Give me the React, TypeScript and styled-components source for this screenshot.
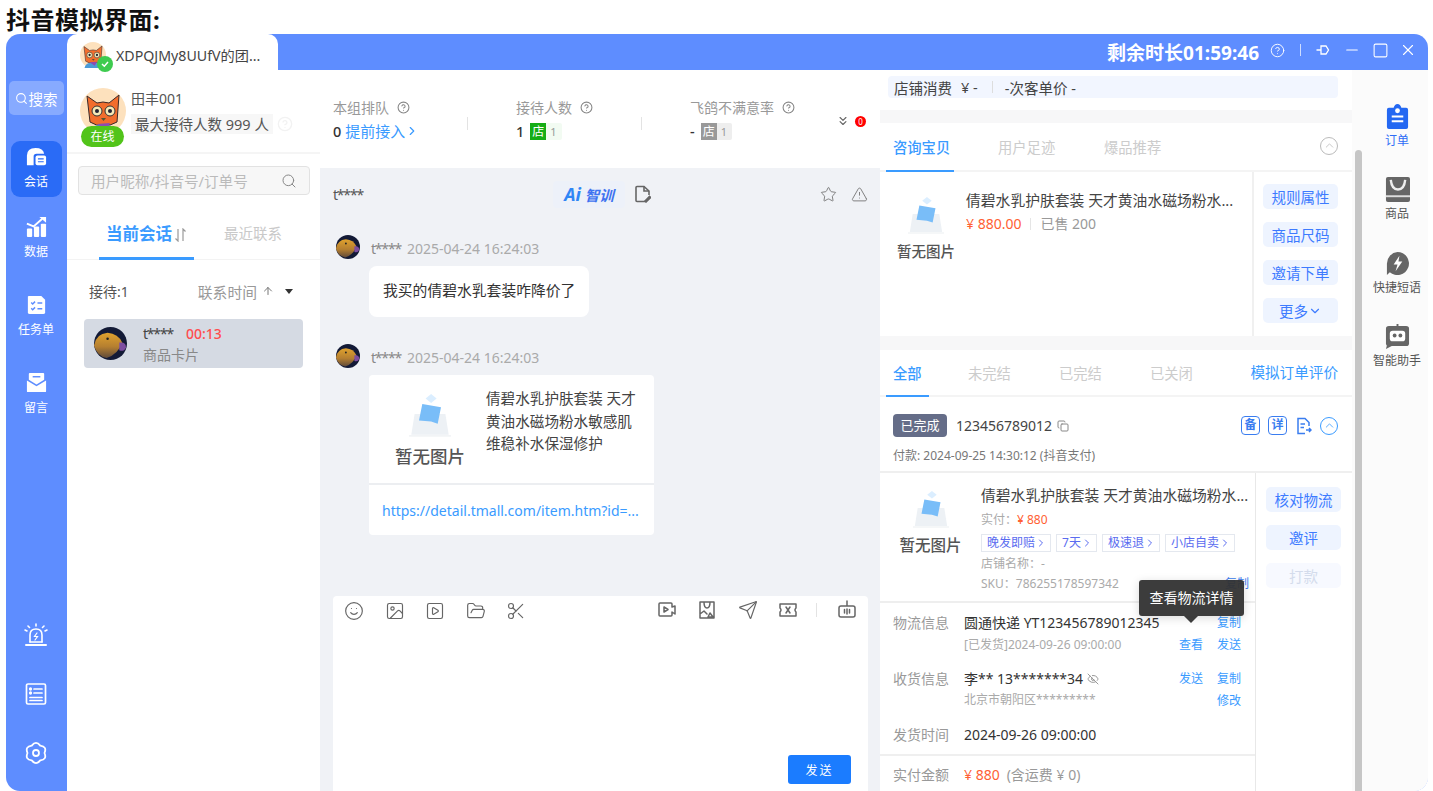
import React from "react";
import styled, { createGlobalStyle } from "styled-components";
import {
  Search, CircleHelp, Star, TriangleAlert, Smile, Image as ImageIcon, SquarePlay, FolderOpen, Scissors,
  Send, Minus, Square, X, ChevronDown, ChevronRight, ChevronUp, ChevronsDown, Copy, ArrowUp, EyeOff,
} from "lucide-react";

const Global = createGlobalStyle`
  html, body { margin: 0; padding: 0; background: #fff; overflow: hidden; }
  * { box-sizing: border-box; }
  body { font-family: "Noto Sans", "Noto Sans CJK SC", sans-serif; color: #333; }
`;

const Page = styled.div`width: 1433px; height: 791px; display: flex; flex-direction: column; overflow: hidden;`;
const Title = styled.h1`margin: 0; height: 34px; padding-left: 6px; font-size: 24px; line-height: 40px; font-weight: 700; color: #111; letter-spacing: .5px;`;
const Win = styled.div`flex: 1; min-height: 0; margin: 0 5px 0 6px; display: flex; border-radius: 14px; overflow: hidden; background: #5e8dff;`;

const Rail = styled.nav`width: 61px; flex: none; display: flex; flex-direction: column; align-items: center; padding: 47px 1px 26px 0; color: #fff;`;
const RailSearch = styled.div`width: 55px; height: 34px; border-radius: 5px; background: rgba(255,255,255,.26); display: flex; align-items: center; justify-content: center; font-size: 14.5px; gap: 1px; margin-bottom: 26px;`;
const RailItem = styled.div<{ $active?: boolean; $mt?: number }>`
  width: 51px; height: 56px; margin-top: ${p => p.$mt ?? 0}px; border-radius: 9px;
  background: ${p => (p.$active ? "#2a6bf6" : "transparent")};
  display: flex; flex-direction: column; align-items: center; justify-content: flex-start; padding-top: 4px; gap: 6px;
  font-size: 12px; line-height: 16px;
  svg { height: 23px; width: 23px; flex: none; }
`;
const RailBottom = styled.div`margin-top: auto; display: flex; flex-direction: column; align-items: center; gap: 35px; svg { display: block; }`;

const Main = styled.div`flex: 1; min-width: 0; display: flex; flex-direction: column;`;
const TopBar = styled.header`height: 36px; flex: none; display: flex; align-items: center; padding-bottom: 4px; color: #fff; position: relative; z-index: 2;`;
const StoreTab = styled.div`width: 211px; height: 37px; align-self: flex-start; background: #fff; border-radius: 10px 10px 0 0; display: flex; align-items: center; padding: 4px 0 0 13px; gap: 10px; color: #444; font-size: 14.2px;`;
const TabAvatar = styled.div`position: relative; width: 26px; height: 26px; svg { display: block; }`;
const CheckDot = styled.span`position: absolute; right: -7px; bottom: -4px; width: 16px; height: 16px; border-radius: 50%; background: #3ecb4f; display: flex; align-items: center; justify-content: center;`;
const Timer = styled.div`margin-left: auto; font-size: 19px; font-weight: 700; letter-spacing: 0; padding-top: 3px;`;
const WinBtns = styled.div`display: flex; align-items: center; margin: 0 11px 0 11px; gap: 10.5px; svg { display: block; }`;
const WinSep = styled.span`width: 1px; height: 12px; background: rgba(255,255,255,.7); margin: 0 4.5px;`;
const PinWrap = styled.span`margin-right: 2.5px;`;

const Body = styled.div`flex: 1; min-height: 0; display: flex; background: #fff;`;

const Session = styled.section`width: 253px; flex: none; display: flex; flex-direction: column; background: #fff;`;
const Me = styled.div`height: 84px; flex: none; border-bottom: 2px solid #f5f5f5; display: flex; padding: 18px 0 0 13px; gap: 5px;`;
const MeAvatar = styled.div`position: relative; width: 46px; height: 46px; svg { display: block; }`;
const Online = styled.span`position: absolute; left: 1px; top: 38px; width: 43px; height: 21px; border-radius: 11px; background: #52c41a; color: #fff; font-size: 12px; line-height: 21px; text-align: center;`;
const MeName = styled.div`font-size: 14px; line-height: 22px; color: #555;`;
const MeLimit = styled.div`display: flex; align-items: center; gap: 4px; margin-top: 4px; svg { color: #f2f2f2; }`;
const Limit = styled.span`background: #f7f7f7; height: 20px; line-height: 20px; padding: 0 4px; font-size: 14.5px; color: #555;`;
const SearchBox = styled.div`margin: 12px 10px 0 11px; height: 29px; flex: none; border: 1px solid #e2e2e2; background: #f7f7f7; border-radius: 4px; display: flex; align-items: center; justify-content: space-between; padding: 0 12px; color: #bbb; font-size: 14.6px; svg { color: #888; }`;
const SessionTabs = styled.div`height: 65px; flex: none; border-bottom: 1px solid #f3f3f3; display: flex; align-items: flex-end; padding-left: 32px;`;
const SessionTabOn = styled.div`width: 95px; height: 40px; margin-bottom: -1px; padding-left: 7px; border-bottom: 3px solid #3a9bff; color: #3a9bff; font-size: 16.5px; font-weight: 700; line-height: 28px; display: flex; gap: 2px; svg { margin-top: 8px; color: #999; }`;
const SessionTabOff = styled.div`margin-left: 30px; height: 40px; line-height: 29px; color: #c9c9c9; font-size: 14.5px;`;
const Queue = styled.div`height: 59px; flex: none; padding: 3px 27px 0 22px; display: flex; align-items: center; justify-content: space-between; font-size: 14px; color: #555;`;
const QueueSort = styled.span`display: flex; align-items: center; color: #999; font-size: 14.8px; gap: 3px; svg { color: #777; margin-left: 2px; }`;
const Caret = styled.i`margin-left: 8px; width: 0; height: 0; border: 4.500px solid transparent; border-top: 5px solid #333; border-bottom: 0;`;
const ChatRow = styled.div`margin-left: 17px; width: 219px; height: 49px; flex: none; border-radius: 4px; background: #d5dae3; display: flex; align-items: center; padding-left: 10px; gap: 16px; svg { display: block; }`;
const RowText = styled.div`padding-top: 2px;`;
const RowName = styled.div`display: flex; gap: 13px; font-size: 14px; line-height: 20px; color: #444;`;
const Masked = styled.span`letter-spacing: -1.2px;`;
const Wait = styled.span`color: #ff4d4f; font-weight: 500;`;
const RowSub = styled.div`font-size: 14px; line-height: 20px; color: #888; margin-top: 1px;`;

const Center = styled.section`width: 560px; flex: none; display: flex; flex-direction: column;`;
const Stats = styled.div`height: 98px; flex: none; display: flex; align-items: center; padding-left: 13px; background: #fff;`;
const Stat = styled.div<{ $w: number }>`width: ${p => p.$w}px; flex: none; display: flex; flex-direction: column; gap: 3px;`;
const StatLabel = styled.div`font-size: 14px; line-height: 21px; color: #999; display: flex; align-items: center; gap: 8px; svg { color: #888; }`;
const StatValue = styled.div`font-size: 14.5px; line-height: 21px; color: #333; font-weight: 500; display: flex; align-items: center; gap: 6px;`;
const LinkText = styled.span`color: #3a9bff; font-weight: 400; font-size: 15px; display: flex; align-items: center; margin-left: -2px;`;
const ShopTag = styled.span<{ $gray?: boolean }>`display: inline-flex; height: 17px; align-items: center; background: ${p => (p.$gray ? "#eee" : "#f2fbf2")}; color: #999; font-size: 11px; font-weight: 400; border-radius: 2px; padding-right: 5px; gap: 4px;`;
const ShopMark = styled.b<{ $gray?: boolean }>`width: 16px; height: 17px; line-height: 17px; text-align: center; background: ${p => (p.$gray ? "#999" : "#16ad16")}; color: #fff; font-size: 12px; font-weight: 400;`;
const StatSep = styled.span`width: 1px; height: 13px; background: #e3e3e3; flex: none; margin-right: 48px; margin-top: 8px;`;
const StatMore = styled.div`margin-left: -6px; display: flex; align-items: center; gap: 5px; color: #666; margin-top: 4px; svg { display: block; }`;
const RedDot = styled.span`width: 11px; height: 11px; border-radius: 50%; background: #f00; color: #fff; font-size: 8px; line-height: 11px; text-align: center;`;

const ChatPane = styled.div`flex: 1; min-height: 0; background: #f0f2f6; display: flex; flex-direction: column;`;
const ChatHead = styled.div`height: 52px; flex: none; display: flex; align-items: center; padding: 0 12px 0 13px; color: #777; svg { display: block; }`;
const ChatName = styled.div`width: 220px; font-size: 14px; color: #555; letter-spacing: -1.2px;`;
const AiBox = styled.div`width: 72px; height: 27px; margin-right: 9px; background: #edf1f9; border-radius: 4px; display: flex; align-items: center; justify-content: center; gap: 4px; font-style: italic; font-weight: 700; color: #3f73f0;`;
const AiMark = styled.span`font-size: 18px; color: #2f86f5;`;
const AiWord = styled.span`font-size: 14.5px;`;
const HeadGap = styled.div`margin-left: auto; display: flex; gap: 14px;`;
const Msgs = styled.div`padding-top: 14px; flex: 1; min-height: 0;`;
const MsgHead = styled.div<{ $mt?: number }>`display: flex; align-items: center; gap: 11px; padding-left: 16px; height: 26px; margin-top: ${p => p.$mt ?? 0}px; font-size: 14px; color: #aaa; svg { display: block; }`;
const MsgText = styled.span`padding-top: 3px;`;
const MsgUser = styled.span`color: #888; margin-right: 6px; letter-spacing: -1.2px;`;
const Bubble = styled.div`margin: 6px 0 0 49px; width: 220px; height: 51px; background: #fff; border-radius: 8px; padding: 0 14px; line-height: 49px; font-size: 14.8px; color: #333; white-space: nowrap;`;
const Card = styled.div`margin: 6px 0 0 49px; width: 285px; height: 160px; background: #fff; border-radius: 4px; display: flex; flex-direction: column;`;
const CardTop = styled.div`height: 110px; flex: none; border-bottom: 2px solid #eceef1; display: flex;`;
const CardThumb = styled.div`width: 117px; flex: none; display: flex; flex-direction: column; align-items: center; padding: 18px 0 0 5px; font-size: 17.5px; font-weight: 500; color: #555; line-height: 24px; gap: 7px; svg { display: block; }`;
const CardText = styled.div`font-size: 14.6px; line-height: 22.5px; color: #444; width: 156px; padding-top: 12px;`;
const CardLink = styled.div`flex: 1; display: flex; align-items: center; padding: 0 13px; font-size: 14px; color: #3a9bff; white-space: nowrap;`;
const Composer = styled.div`height: 195px; flex: none; margin: 0 12px 0 13px; background: #fff; border-radius: 4px 4px 0 0; display: flex; flex-direction: column; padding: 5px 10px 7px 11px;`;
const Tools = styled.div`display: flex; align-items: center; color: #666; height: 20px; svg { display: block; }`;
const ToolsL = styled.div`display: flex; gap: 20.5px;`;
const ToolsR = styled.div`margin: -3px 1px 0 auto; display: flex; align-items: center; gap: 20.5px;`;
const ToolSep = styled.span`width: 1px; height: 14px; background: #e3e3e3; margin-left: -3px;`;
const SendBtn = styled.button`margin: auto 7px 0 auto; width: 63px; height: 29px; border: 0; border-radius: 3px; background: #1b7cff; color: #fff; font: inherit; font-size: 12px; letter-spacing: 2px;`;

const Detail = styled.section`width: 472px; flex: none; background: #f7f7f8; display: flex; flex-direction: column; gap: 13px;`;
const StripWrap = styled.div`height: 40px; flex: none; background: #fff; padding: 6px 14px 0 8px;`;
const Strip = styled.div`height: 22px; background: #f2f6ff; border-radius: 4px; display: flex; align-items: center; padding-left: 6px; font-size: 14.5px; color: #444;`;
const StripFee = styled.span`margin-left: 9px;`;
const StripSep = styled.span`width: 1px; height: 12px; background: #ddd; margin: 0 12px 0 14px;`;
const Panel = styled.div`height: 213px; flex: none; background: #fff; display: flex; flex-direction: column;`;
const TabRow = styled.div<{ $h: number }>`height: ${p => p.$h}px; flex: none; border-bottom: 2px solid #f4f4f4; display: flex; align-items: flex-end; padding: 0 14px 0 6px; position: relative;`;
const DTab = styled.div<{ $w?: number; $on?: boolean; $pl?: number }>`
  height: 100%; width: ${p => p.$w ?? 68}px; margin-bottom: -2px; display: flex; align-items: center; padding: 0 0 2px ${p => p.$pl ?? 7}px;
  font-size: 14.3px; color: ${p => (p.$on ? "#3a9bff" : "#ccc")}; font-weight: ${p => (p.$on ? 500 : 400)}; white-space: nowrap;
  border-bottom: 2px solid ${p => (p.$on ? "#3a9bff" : "transparent")};
`;
const TabEnd = styled.div`margin-left: auto; height: 100%; display: flex; align-items: center; color: #3a9bff; font-size: 14.6px; padding-bottom: 2px; white-space: nowrap;`;
const Collapse = styled.span<{ $blue?: boolean }>`width: 18px; height: 18px; border-radius: 50%; border: 1px solid ${p => (p.$blue ? "#3a9bff" : "#bbb")}; color: ${p => (p.$blue ? "#3a9bff" : "#bbb")}; display: flex; align-items: center; justify-content: center;`;
const ConsultBody = styled.div`flex: 1; display: flex; min-height: 0;`;
const GoodsThumb = styled.div<{ $w: number; $fs: number; $mt: number }>`width: ${p => p.$w}px; flex: none; padding-top: ${p => p.$mt}px; display: flex; flex-direction: column; align-items: center; font-size: ${p => p.$fs}px; line-height: 24px; font-weight: 500; color: #555; gap: 5px; white-space: nowrap; svg { display: block; }`;
const ConsultGoods = styled.div`flex: 1; min-width: 0; display: flex; padding: 16px 12px 0 16px; gap: 10px;`;
const GoodsInfo = styled.div`flex: 1; min-width: 0;`;
const GoodsTitle = styled.div`font-size: 14.8px; line-height: 24px; color: #444; white-space: nowrap;`;
const GoodsMeta = styled.div`display: flex; align-items: center; font-size: 14px; line-height: 24px; color: #999;`;
const Price = styled.span`color: #ff5f33;`;
const MetaSep = styled.span`width: 1px; height: 12px; background: #e5e5e5; margin: 0 9px;`;
const Actions = styled.div<{ $w: number; $pad: string; $border?: boolean }>`
  width: ${p => p.$w}px; flex: none; padding: ${p => p.$pad}; display: flex; flex-direction: column; gap: 13px;
  border-left: ${p => (p.$border ? "2px solid #f0f0f0" : "0")};
`;
const ActBtn = styled.div<{ $off?: boolean }>`width: 75px; height: 25px; flex: none; border-radius: 5px; background: ${p => (p.$off ? "#f7f9ff" : "#eef4ff")}; color: ${p => (p.$off ? "#d4dcec" : "#3d7bff")}; font-size: 14.5px; display: flex; align-items: center; justify-content: center;`;

const Orders = styled.div`flex: 1; min-height: 0; background: #fff; position: relative; display: flex; flex-direction: column; margin-top: 1px;`;
const OrderHead = styled.div`height: 76px; flex: none; border-bottom: 2px solid #efefef; padding: 17px 14px 0 13px;`;
const OrderLine = styled.div`display: flex; align-items: center; height: 23px; color: #3a7df0; svg { display: block; }`;
const Done = styled.span`width: 54px; height: 23px; background: #656d88; color: #fff; border-radius: 4px; font-size: 13px; line-height: 23px; text-align: center;`;
const OrderNo = styled.span`margin: 0 5px 0 9px; font-size: 14px; color: #444;`;
const OrderIcons = styled.div`margin-left: auto; display: flex; align-items: center; gap: 8px;`;
const BoxGlyph = styled.span`width: 19px; height: 19px; border: 1.5px solid #3a7df0; border-radius: 4px; color: #3a7df0; font-size: 12px; font-weight: 700; line-height: 16px; text-align: center;`;
const PayLine = styled.div`margin-top: 10px; font-size: 12px; line-height: 18px; color: #777;`;
const OrderBody = styled.div`flex: 1; min-height: 0; display: flex;`;
const OrderLeft = styled.div`width: 376px; flex: none; border-right: 1px solid #e8e8e8; display: flex; flex-direction: column;`;
const OrderGoods = styled.div`height: 130px; flex: none; border-bottom: 2px solid #eee; display: flex; padding: 11px 6px 0 12px; gap: 12px;`;
const OrderInfoCol = styled.div`flex: 1; min-width: 0;`;
const OrderTitle = styled(GoodsTitle)`line-height: 22px;`;
const SmallLine = styled.div`font-size: 12px; line-height: 20px; color: #aaa; display: flex; justify-content: space-between;`;
const PaidLine = styled(SmallLine)`justify-content: flex-start; margin-top: 4px;`;
const TagRow = styled.div`display: flex; gap: 5px; margin: 4px 0 2px;`;
const Tag = styled.span`height: 18px; padding: 0 3px 0 5px; border: 1px solid #e4e8ef; font-size: 12px; line-height: 16px; color: #5a6cf0; display: flex; align-items: center; white-space: nowrap;`;
const CopyHidden = styled.span`color: #3a7df0;`;
const InfoWrap = styled.div`padding: 9px 0 0 13px;`;
const InfoRow = styled.div<{ $mt?: number }>`display: grid; grid-template-columns: 71px 1fr 76px; margin-top: ${p => p.$mt ?? 0}px;`;
const InfoLabel = styled.div`font-size: 14px; line-height: 22px; color: #999;`;
const InfoMain = styled.div`font-size: 14px; line-height: 22px; color: #333; display: flex; align-items: center; gap: 4px; svg { color: #999; }`;
const InfoSub = styled.div<{ $lh?: number }>`font-size: 12px; line-height: ${p => p.$lh ?? 22}px; color: #aaa;`;
const InfoActs = styled.div`display: grid; grid-template-columns: 38px 38px; font-size: 12px; line-height: 22px; color: #3a9bff; align-content: start;`;
const ActCell = styled.span<{ $col: number }>`grid-column: ${p => p.$col};`;
const TotalSep = styled.div`height: 2px; background: #efefef; margin-top: 8px;`;
const TotalRow = styled.div`padding: 8px 0 0 13px; display: grid; grid-template-columns: 71px 1fr;`;
const TotalVal = styled.div`font-size: 14px; line-height: 22px; color: #999; display: flex; gap: 7px;`;
const Tip = styled.div`
  position: absolute; left: 259px; top: 230px; width: 105px; height: 36px; background: rgba(50,50,50,.95); color: #fff;
  border-radius: 3px; font-size: 14px; line-height: 36px; text-align: center; box-shadow: 0 2px 10px rgba(0,0,0,.15);
  &::after { content: ""; position: absolute; left: 45px; bottom: -7px; border: 7px solid transparent; border-top-color: rgba(50,50,50,.95); border-bottom: 0; }
`;

const SideRail = styled.aside`width: 76px; flex: none; background: #fbfbfb; position: relative; display: flex; flex-direction: column; align-items: center; padding: 34px 0 0 14px;`;
const SideItem = styled.div<{ $on?: boolean }>`width: 60px; height: 73.3px; display: flex; flex-direction: column; align-items: center; gap: 3px; font-size: 12px; line-height: 18px; color: ${p => (p.$on ? "#2f6df6" : "#555")}; svg { display: block; }`;
const Thumb = styled.div`position: absolute; left: 3px; top: 80px; bottom: 0; width: 7px; background: #c6c6c6; border-radius: 4px 4px 0 0;`;

const Cat = ({ s }: { s: number }) => (
  <svg width={s} height={s} viewBox="0 0 46 46">
    <circle cx="23" cy="23" r="23" fill="#fde1bd" />
    <path d="M10 34 L7 8 L17 15 Q23 13 29 15 L39 7 L37 34 Q23 42 10 34Z" fill="#f26d2d" stroke="#3a2a2a" strokeWidth="1" />
    <circle cx="17" cy="23" r="5" fill="#f6e9b8" stroke="#333" /><circle cx="30" cy="23" r="5" fill="#f6e9b8" stroke="#333" />
    <circle cx="17" cy="23" r="2" fill="#223" /><circle cx="30" cy="23" r="2" fill="#223" />
    <path d="M21 30 h5 l-2.500 3z" fill="#553" />
    <path d="M8 46 Q10 36 23 37 Q36 36 38 46Z" fill="#4c9bd6" /><path d="M17 36 L30 35 L26 42Z" fill="#8d4bb0" />
  </svg>
);
const Fish = ({ s }: { s: number }) => (
  <svg width={s} height={s} viewBox="0 0 34 34">
    <defs><linearGradient id="fishBody" x1="0" y1="0" x2="0" y2="1"><stop offset="0" stopColor="#e0a22e" /><stop offset=".55" stopColor="#b57f30" /><stop offset="1" stopColor="#5f4a3a" /></linearGradient></defs>
    <circle cx="17" cy="17" r="17" fill="#131a36" />
    <path d="M0 19 Q2 7 14 6 Q25 7 29 16 Q25 28 13 32 Q3 30 0 19Z" fill="url(#fishBody)" />
    <path d="M26 16 Q33 15 33 21 Q31 26 26 24Z" fill="#7e4ea0" /><circle cx="14" cy="12" r="1.300" fill="#222" />
  </svg>
);
const NoPic = ({ w }: { w: number }) => (
  <svg width={w} height={w} viewBox="0 0 40 40">
    <path d="M6 19 H34 L37 38 H3Z" fill="#edf1f5" />
    <path d="M1 39 H39" stroke="#f2f4f6" strokeWidth="1.500" />
    <path d="M21 1 l5 4 -5 4 -5-4z" fill="#dbeeff" />
    <path d="M13 10 L30 13 L27 28 L21 26 L10 25Z" fill="#79bdf8" />
  </svg>
);
const IconChat = () => (
  <svg viewBox="0 0 24 24" fill="#fff"><path d="M2 21 V11 Q2 3 11 3 Q19 3 20 9 H12 Q9 9 9 12 V21Z" /><rect x="11" y="11" width="11" height="10" rx="2" /><path d="M13.500 14.500 h6 M13.500 17.500 h6" stroke="#2a6bf6" strokeWidth="1.200" /></svg>
);
const IconData = () => (
  <svg viewBox="0 0 24 24" fill="#fff"><rect x="2" y="14" width="5.500" height="9" rx="1" /><rect x="9.300" y="12" width="5.500" height="11" rx="1" /><rect x="16.500" y="9" width="5.500" height="14" rx="1" /><path d="M2 9 L9 12 L18 4" stroke="#fff" strokeWidth="2" fill="none" /><path d="M15 2 H22 V8Z" /></svg>
);
const IconTask = () => (
  <svg viewBox="0 0 24 24" fill="#fff"><path d="M4 3 H17 L21 7 V20 Q21 22 19 22 H5 Q3 22 3 20 V4 Q3 3 4 3Z" /><path d="M6.500 10 l1.500 1.500 2.500-2.500 M6.500 16 l1.500 1.500 2.500-2.500 M13 10.500 h5 M13 16.500 h5" stroke="#5e8dff" strokeWidth="1.500" fill="none" /></svg>
);
const IconMail = () => (
  <svg viewBox="0 0 24 24" fill="#fff"><path d="M5 2 H19 Q20 2 20 3 V9 L12 14 L4 9 V3 Q4 2 5 2Z" /><path d="M2 10 L12 16 L22 10 V21 Q22 22 21 22 H3 Q2 22 2 21Z" /><path d="M8 6 h8" stroke="#5e8dff" strokeWidth="1.500" /></svg>
);
const IconAlarm = () => (
  <svg width="24" height="24" viewBox="0 0 24 24" fill="none" stroke="#fff" strokeWidth="1.600" strokeLinecap="round"><path d="M6 19 V12 Q6 6 12 6 Q18 6 18 12 V19" /><path d="M2 22 H22" strokeWidth="2" /><path d="M6 19 H18" /><path d="M12 1 V3 M4 3 L5.500 4.500 M20 3 L18.500 4.500 M1 7 L3 8 M23 7 L21 8" /><path d="M13 10 L10.500 13.500 H13.500 L11 17" strokeWidth="1.200" /></svg>
);
const IconList = () => (
  <svg width="24" height="24" viewBox="0 0 24 24" fill="none" stroke="#fff" strokeWidth="1.700" strokeLinecap="round"><rect x="2.500" y="2" width="19" height="20" rx="1.500" /><path d="M10 7 H18 M10 11 H18 M6 15.500 H18 M6 18.500 H18" /><circle cx="6.500" cy="7" r=".8" fill="#fff" /><circle cx="6.500" cy="11" r=".8" fill="#fff" /></svg>
);
const IconGear = () => (
  <svg width="24" height="24" viewBox="0 0 24 24" fill="none" stroke="#fff" strokeWidth="1.800" strokeLinejoin="round"><path d="M20.500 12 Q23.260 18.500 16.250 19.360 Q12 25 7.750 19.360 Q.74 18.500 3.500 12 Q.74 5.500 7.750 4.640 Q12 -1 16.250 4.640 Q23.260 5.500 20.500 12Z" /><circle cx="12" cy="12" r="3" /></svg>
);
const IconPin = () => (
  <svg width="14" height="14" viewBox="0 0 14 14" fill="none" stroke="#fff" strokeWidth="1.300"><path d="M5 3 H10 L12.500 7 L10 11 H5Z" /><path d="M0.500 7 H5" /></svg>
);
const IconDoc = () => (
  <svg width="17" height="18" viewBox="0 0 17 18" fill="none" stroke="#666" strokeWidth="1.600"><path d="M11 16.500 H3 Q2 16.500 2 15.500 V2.500 Q2 1.500 3 1.500 H10 L15 6 V10" /><path d="M10 1.500 V6 H15" /><path d="M11 16 L15.500 11.500 L16.500 12.500 L12 17Z" fill="#666" /></svg>
);
const ToolSvg = ({ d }: { d: string }) => (
  <svg width="20" height="20" viewBox="0 0 20 20" fill="none" stroke="#666" strokeWidth="1.500" strokeLinejoin="round" strokeLinecap="round"><path d={d} /></svg>
);
const SideOrder = () => (
  <svg width="25" height="25" viewBox="0 0 26 26"><path d="M4 4 H9 Q10 0 13 0 Q16 0 17 4 H22 Q24 4 24 6 V24 Q24 26 22 26 H4 Q2 26 2 24 V6 Q2 4 4 4Z" fill="#2468f2" /><circle cx="13" cy="7" r="2.500" fill="#fff" /><path d="M7 13 H19 M7 18 H19" stroke="#fff" strokeWidth="2.200" /></svg>
);
const SideGoods = () => (
  <svg width="25" height="25" viewBox="0 0 26 26"><rect x="1" y="0" width="25" height="26" rx="2" fill="#666" /><rect x="1" y="19" width="25" height="2" fill="#ddd" /><path d="M6 3 Q7 13 13.500 13 Q20 13 21 3" stroke="#eee" strokeWidth="2.500" fill="none" /></svg>
);
const SideQuick = () => (
  <svg width="25" height="25" viewBox="0 0 26 26"><path d="M13 1 A12 12 0 1 1 5 22 L2 25 V13 A12 12 0 0 1 13 1Z" fill="#666" /><path d="M15 5 L9 14 H13 L11 21 L18 11 H14Z" fill="#fff" /></svg>
);
const SideBot = () => (
  <svg width="25" height="25" viewBox="0 0 26 26"><rect x="1" y="2" width="24" height="21" rx="3" fill="#666" /><path d="M2 22 L1 26 L7 23Z" fill="#666" /><rect x="5" y="7" width="16" height="11" rx="3" fill="#fff" /><circle cx="10" cy="12" r="2" fill="#666" /><circle cx="16" cy="12" r="2" fill="#666" /><rect x="12" y="0" width="2" height="3" fill="#666" /></svg>
);

const longName = "倩碧水乳护肤套装 天才黄油水磁场粉水...";

export default function App() {
  return (
    <Page>
      <Global />
      <Title>抖音模拟界面:</Title>
      <Win>
        <Rail>
          <RailSearch><Search size={13} />搜索</RailSearch>
          <RailItem $active><IconChat />会话</RailItem>
          <RailItem $mt={14}><IconData />数据</RailItem>
          <RailItem $mt={22}><IconTask />任务单</RailItem>
          <RailItem $mt={22}><IconMail />留言</RailItem>
          <RailBottom><IconAlarm /><IconList /><IconGear /></RailBottom>
        </Rail>
        <Main>
          <TopBar>
            <StoreTab>
              <TabAvatar><Cat s={26} /><CheckDot><svg width="10" height="10" viewBox="0 0 10 10" fill="none" stroke="#fff" strokeWidth="1.500"><path d="M2 5 L4.300 7.200 L8 3" /></svg></CheckDot></TabAvatar>
              XDPQJMy8UUfV的团...
            </StoreTab>
            <Timer>剩余时长01:59:46</Timer>
            <WinBtns>
              <CircleHelp size={15} strokeWidth={1.500} />
              <WinSep />
              <PinWrap><IconPin /></PinWrap>
              <Minus size={18} strokeWidth={1.500} />
              <Square size={17} strokeWidth={1.500} />
              <X size={18} strokeWidth={1.500} />
            </WinBtns>
          </TopBar>
          <Body>
            <Session>
              <Me>
                <MeAvatar><Cat s={46} /><Online>在线</Online></MeAvatar>
                <div>
                  <MeName>田丰001</MeName>
                  <MeLimit><Limit>最大接待人数 999 人</Limit><CircleHelp size={16} /></MeLimit>
                </div>
              </Me>
              <SearchBox>用户昵称/抖音号/订单号<Search size={16} strokeWidth={1.500} /></SearchBox>
              <SessionTabs>
                <SessionTabOn>当前会话<svg width="14" height="14" viewBox="0 0 14 14" fill="none" stroke="currentColor" strokeWidth="1.200"><path d="M4 1 V13 L1.500 10.500 M9 13 V1 L11.500 3.500" /></svg></SessionTabOn>
                <SessionTabOff>最近联系</SessionTabOff>
              </SessionTabs>
              <Queue>
                接待:1
                <QueueSort>联系时间<ArrowUp size={12} /><Caret /></QueueSort>
              </Queue>
              <ChatRow>
                <Fish s={33} />
                <RowText>
                  <RowName><Masked>t****</Masked><Wait>00:13</Wait></RowName>
                  <RowSub>商品卡片</RowSub>
                </RowText>
              </ChatRow>
            </Session>
            <Center>
              <Stats>
                <Stat $w={134}>
                  <StatLabel>本组排队<CircleHelp size={13} /></StatLabel>
                  <StatValue>0<LinkText>提前接入<ChevronRight size={14} /></LinkText></StatValue>
                </Stat>
                <StatSep />
                <Stat $w={125}>
                  <StatLabel>接待人数<CircleHelp size={13} /></StatLabel>
                  <StatValue>1<ShopTag><ShopMark>店</ShopMark>1</ShopTag></StatValue>
                </Stat>
                <StatSep />
                <Stat $w={152}>
                  <StatLabel>飞鸽不满意率<CircleHelp size={13} /></StatLabel>
                  <StatValue>-<ShopTag $gray><ShopMark $gray>店</ShopMark>1</ShopTag></StatValue>
                </Stat>
                <StatMore><ChevronsDown size={14} /><RedDot>0</RedDot></StatMore>
              </Stats>
              <ChatPane>
                <ChatHead>
                  <ChatName>t****</ChatName>
                  <AiBox><AiMark>Ai</AiMark><AiWord>智训</AiWord></AiBox>
                  <IconDoc />
                  <HeadGap><Star size={17} strokeWidth={1.300} /><TriangleAlert size={17} strokeWidth={1.300} /></HeadGap>
                </ChatHead>
                <Msgs>
                  <MsgHead><Fish s={24} /><MsgText><MsgUser>t****</MsgUser>2025-04-24 16:24:03</MsgText></MsgHead>
                  <Bubble>我买的倩碧水乳套装咋降价了</Bubble>
                  <MsgHead $mt={26}><Fish s={24} /><MsgText><MsgUser>t****</MsgUser>2025-04-24 16:24:03</MsgText></MsgHead>
                  <Card>
                    <CardTop>
                      <CardThumb><NoPic w={44} />暂无图片</CardThumb>
                      <CardText>倩碧水乳护肤套装 天才黄油水磁场粉水敏感肌维稳补水保湿修护</CardText>
                    </CardTop>
                    <CardLink>https://detail.tmall.com/item.htm?id=...</CardLink>
                  </Card>
                </Msgs>
                <Composer>
                  <Tools>
                    <ToolsL>
                      <Smile size={20} strokeWidth={1.400} />
                      <ImageIcon size={20} strokeWidth={1.400} />
                      <SquarePlay size={20} strokeWidth={1.400} />
                      <FolderOpen size={20} strokeWidth={1.400} />
                      <Scissors size={20} strokeWidth={1.400} />
                    </ToolsL>
                    <ToolsR>
                      <ToolSvg d="M15 7 V4 Q15 3 14 3 H3 Q2 3 2 4 V15 Q2 16 3 16 H14 Q15 16 15 15 V12 L18 14 V6Z M7 7 L11 9.500 L7 12Z" />
                      <ToolSvg d="M3 2 H17 V18 H3Z M7 2 Q7 8 10 8 Q13 8 13 2 M3 14 L7 11 L10 14 M13 13 L16 17 H11Z" />
                      <Send size={20} strokeWidth={1.400} />
                      <ToolSvg d="M2 4 H18 V8 Q16 10 18 12 V16 H2 V12 Q4 10 2 8Z M8 7 L12 13 M12 7 L8 13" />
                      <ToolSep />
                      <ToolSvg d="M4 6 H16 Q18 6 18 8 V15 Q18 17 16 17 H4 Q2 17 2 15 V8 Q2 6 4 6Z M10 1 V6 M7.500 9.500 V13 M12.500 9.500 V13 M10 9 V14" />
                    </ToolsR>
                  </Tools>
                  <SendBtn>发送</SendBtn>
                </Composer>
              </ChatPane>
            </Center>
            <Detail>
              <StripWrap>
                <Strip>店铺消费<StripFee>¥ -</StripFee><StripSep />-次客单价 -</Strip>
              </StripWrap>
              <Panel>
                <TabRow $h={49}>
                  <DTab $on>咨询宝贝</DTab>
                  <DTab $w={106} $pl={44}>用户足迹</DTab>
                  <DTab $w={106} $pl={44}>爆品推荐</DTab>
                  <TabEnd><Collapse><ChevronUp size={13} strokeWidth={1.500} /></Collapse></TabEnd>
                </TabRow>
                <ConsultBody>
                  <ConsultGoods>
                    <GoodsThumb $w={60} $fs={14.5} $mt={8}><NoPic w={38} />暂无图片</GoodsThumb>
                    <GoodsInfo>
                      <GoodsTitle>{longName}</GoodsTitle>
                      <GoodsMeta><Price>¥ 880.00</Price><MetaSep />已售 200</GoodsMeta>
                    </GoodsInfo>
                  </ConsultGoods>
                  <Actions $w={100} $pad="12px 0 0 9px" $border>
                    <ActBtn>规则属性</ActBtn>
                    <ActBtn>商品尺码</ActBtn>
                    <ActBtn>邀请下单</ActBtn>
                    <ActBtn>更多<ChevronDown size={14} /></ActBtn>
                  </Actions>
                </ConsultBody>
              </Panel>
              <Orders>
                <TabRow $h={47}>
                  <DTab $w={43} $on>全部</DTab>
                  <DTab $w={75} $pl={39}>未完结</DTab>
                  <DTab $w={91} $pl={55}>已完结</DTab>
                  <DTab $w={91} $pl={55}>已关闭</DTab>
                  <TabEnd>模拟订单评价</TabEnd>
                </TabRow>
                <OrderHead>
                  <OrderLine>
                    <Done>已完成</Done>
                    <OrderNo>123456789012</OrderNo>
                    <Copy size={12} color="#888" />
                    <OrderIcons>
                      <BoxGlyph>备</BoxGlyph>
                      <BoxGlyph>详</BoxGlyph>
                      <svg width="17" height="18" viewBox="0 0 17 18" fill="none" stroke="#3a7df0" strokeWidth="1.500"><path d="M10 16.500 H3 V1.500 H10 L14 5.500 V9" /><path d="M5.500 7 H10 M5.500 10.500 H9" /><path d="M11 13 H16 M14 11 L16 13 L14 15" /></svg>
                      <Collapse $blue><ChevronUp size={13} strokeWidth={1.500} /></Collapse>
                    </OrderIcons>
                  </OrderLine>
                  <PayLine>付款: 2024-09-25 14:30:12 (抖音支付)</PayLine>
                </OrderHead>
                <OrderBody>
                  <OrderLeft>
                    <OrderGoods>
                      <GoodsThumb $w={77} $fs={15.5} $mt={6}><NoPic w={38} />暂无图片</GoodsThumb>
                      <OrderInfoCol>
                        <OrderTitle>{longName}</OrderTitle>
                        <PaidLine>实付：<Price>¥ 880</Price></PaidLine>
                        <TagRow>
                          <Tag>晚发即赔<ChevronRight size={12} /></Tag>
                          <Tag>7天<ChevronRight size={12} /></Tag>
                          <Tag>极速退<ChevronRight size={12} /></Tag>
                          <Tag>小店自卖<ChevronRight size={12} /></Tag>
                        </TagRow>
                        <SmallLine>店铺名称：-</SmallLine>
                        <SmallLine>SKU：786255178597342<CopyHidden>复制</CopyHidden></SmallLine>
                      </OrderInfoCol>
                    </OrderGoods>
                    <InfoWrap>
                      <InfoRow>
                        <InfoLabel>物流信息</InfoLabel>
                        <div>
                          <InfoMain>圆通快递 YT123456789012345</InfoMain>
                          <InfoSub>[已发货]2024-09-26 09:00:00</InfoSub>
                        </div>
                        <InfoActs><ActCell $col={2}>复制</ActCell><ActCell $col={1}>查看</ActCell><ActCell $col={2}>发送</ActCell></InfoActs>
                      </InfoRow>
                      <InfoRow $mt={12}>
                        <InfoLabel>收货信息</InfoLabel>
                        <div>
                          <InfoMain>李** 13*******34<EyeOff size={12} /></InfoMain>
                          <InfoSub $lh={20}>北京市朝阳区*********</InfoSub>
                        </div>
                        <InfoActs><ActCell $col={1}>发送</ActCell><ActCell $col={2}>复制</ActCell><ActCell $col={2}>修改</ActCell></InfoActs>
                      </InfoRow>
                      <InfoRow $mt={12}>
                        <InfoLabel>发货时间</InfoLabel>
                        <InfoMain>2024-09-26 09:00:00</InfoMain>
                      </InfoRow>
                    </InfoWrap>
                    <TotalSep />
                    <TotalRow>
                      <InfoLabel>实付金额</InfoLabel>
                      <TotalVal><Price>¥ 880</Price>(含运费 ¥ 0)</TotalVal>
                    </TotalRow>
                  </OrderLeft>
                  <Actions $w={95} $pad="14px 0 0 10px">
                    <ActBtn>核对物流</ActBtn>
                    <ActBtn>邀评</ActBtn>
                    <ActBtn $off>打款</ActBtn>
                  </Actions>
                </OrderBody>
                <Tip>查看物流详情</Tip>
              </Orders>
            </Detail>
            <SideRail>
              <Thumb />
              <SideItem $on><SideOrder />订单</SideItem>
              <SideItem><SideGoods />商品</SideItem>
              <SideItem><SideQuick />快捷短语</SideItem>
              <SideItem><SideBot />智能助手</SideItem>
            </SideRail>
          </Body>
        </Main>
      </Win>
    </Page>
  );
}
